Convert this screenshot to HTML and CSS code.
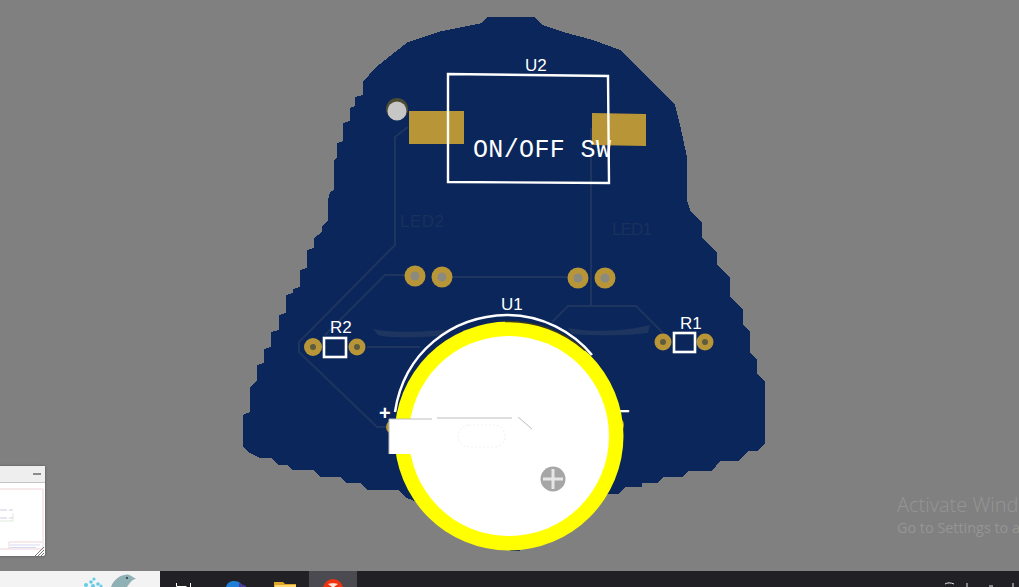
FILE: index.html
```html
<!DOCTYPE html>
<html lang="en">
<head>
    <meta charset="UTF-8">
    <meta name="viewport" content="width=device-width, initial-scale=1.0">
    <title>PCB 3D View</title>
    <link rel="stylesheet" href="styles.css">
</head>
<body>
    <div class="screen">
        <div class="viewport">
            <svg class="board" viewBox="0 0 1019 571" xmlns="http://www.w3.org/2000/svg">
                <!-- board outline, the stepped edge comes from the 3D view -->
                <polygon class="pcb" points="487,17 535,17 542,25 563,32 593,40 620,50 627,57 675,105 680,125 687,157 687,200 690,210 702,223 702,237 717,253 717,265 730,278 730,297 743,310 743,325 750,332 750,352 757,360 757,373 765,382 765,443 758,451 748,451 738,461 720,461 712,471 688,471 683,477 663,477 658,483 642,483 642,487 625,487 618,494 600,494 520,540 520,551 510,551 505,540 405,497 398,490 367,490 360,483 347,483 340,477 320,477 313,470 293,470 287,465 278,465 272,458 260,458 250,453 243,447 243,415 250,412 250,388 257,380 257,365 264,363 264,349 271,347 271,332 279,330 279,315 286,313 286,295 293,293 293,289 300,287 300,270 307,268 307,250 314,248 314,238 322,232 322,226 328,220 328,200 330,192 334,190 334,160 337,158 337,143 343,141 343,123 350,121 350,108 355,106 355,97 363,95 363,82 375,68 395,52 408,42 438,32 482,23"/>

                <!-- copper traces -->
                <g class="trace">
                    <polyline points="408,127 395,137 395,245 299,342 299,352 377,427 389,427"/>
                    <polyline points="405,275 385,275 325,335"/>
                    <polyline points="367,347 420,347"/>
                    <polyline points="452,277 570,277"/>
                    <polyline points="591,128 591,306"/>
                    <polyline points="552,322 568,306 636,306 663,333"/>
                </g>
                <path class="silk-dim" d="M373,329 C395,334 430,331 455,329 L440,336 C415,338 385,338 378,335 Z"/>
                <path class="silk-dim" d="M568,328 C595,333 625,331 650,325 L648,333 C625,336 590,336 572,334 Z"/>
                <text class="label-dim" x="400" y="227" textLength="44">LED2</text>
                <text class="label-dim" x="612" y="235" textLength="40">LED1</text>

                <!-- pads -->
                <polygon class="gold" points="409,111 464,111 464,144 409,144"/>
                <polygon class="gold" points="592,113 646,114 646,146 592,145"/>
                <circle class="hole-edge" cx="397" cy="109" r="11"/>
                <circle class="hole" cx="397" cy="111" r="9.5"/>

                <g class="gold">
                    <circle cx="415" cy="276" r="10.5"/>
                    <circle cx="442" cy="277" r="10.5"/>
                    <circle cx="578" cy="278" r="10.5"/>
                    <circle cx="605" cy="278" r="10.5"/>
                    <circle cx="313" cy="347" r="9"/>
                    <circle cx="357" cy="347" r="8.5"/>
                    <circle cx="663" cy="342" r="8.5"/>
                    <circle cx="705" cy="342" r="8.5"/>
                    <circle cx="393" cy="427" r="7"/>
                    <circle cx="615" cy="425" r="9"/>
                </g>
                <g class="drill">
                    <circle cx="415" cy="276" r="4.5"/>
                    <circle cx="442" cy="277" r="4.5"/>
                    <circle cx="578" cy="278" r="4.5"/>
                    <circle cx="605" cy="278" r="4.5"/>
                </g>
                <g class="drill-small">
                    <circle cx="313" cy="347" r="3"/>
                    <circle cx="357" cy="347" r="3"/>
                    <circle cx="663" cy="342" r="3"/>
                    <circle cx="705" cy="342" r="3"/>
                </g>

                <!-- silkscreen -->
                <polygon class="silk" points="448,74 608,76 609,183 448,182"/>
                <rect class="silk-box" x="324" y="338" width="22" height="19"/>
                <rect class="silk-box" x="674" y="333" width="21" height="19"/>
                <text class="label" x="525" y="71">U2</text>
                <text class="label" x="330" y="333">R2</text>
                <text class="label" x="680" y="329">R1</text>
                <text class="label" x="501" y="310">U1</text>
                <text class="label-big" x="473" y="157" textLength="138">ON/OFF SW</text>
                <text class="sign" x="379" y="420">+</text>
                <text class="sign" x="618" y="418">−</text>

                <!-- coin cell holder -->
                <path class="arc" d="M395,412 C404,352 452,316 507,315 C542,315 573,332 592,355"/>
                <circle class="ring" cx="509" cy="436" r="114.5"/>
                <path class="ring-shade" d="M505,321.6 A114.5 114.5 0 0 1 585,350.4"/>
                <circle class="cell" cx="509" cy="436" r="100"/>
                <rect class="tab" x="389" y="419" width="40" height="35"/>
                <polyline class="tab-edge" points="389,454 389,419 432,419"/>
                <polyline class="tab-edge" points="437,418 512,418"/>
                <polyline class="tab-edge" points="518,417 532,429"/>
                <rect class="pill" x="458" y="425" width="47" height="22" rx="11"/>
                <circle class="screw" cx="553" cy="479" r="12.5"/>
                <path class="screw-cross" d="M543,479 H563 M553,469 V489"/>
            </svg>

            <div class="mini-window">
                <div class="mini-title"><span class="mini-min"></span></div>
                <div class="mini-body">
                    <svg class="mini-sheet" viewBox="0 0 45 73" xmlns="http://www.w3.org/2000/svg">
                        <polyline class="sheet-frame" points="0,6 43,6 43,66 0,66"/>
                        <polyline class="sheet-frame" points="9,66 9,59 42,59"/>
                        <path class="sheet-part" d="M0,27 H7 M9,27 H13 M0,35 H7 M9,35 H13"/>
                        <polyline class="sheet-box" points="0,38 13,38 13,30"/>
                        <path class="sheet-block" d="M10,62 H40 M10,64.5 H36"/>
                        <path class="sheet-grip" d="M35,73 L44,64 M38,73 L44,67 M41,73 L44,70"/>
                    </svg>
                </div>
            </div>

            <div class="watermark">
                <div class="watermark-big">Activate Wind</div>
                <div class="watermark-small">Go to Settings to a</div>
            </div>
        </div>

        <div class="taskbar">
            <div class="search">
                <svg class="search-art" viewBox="0 0 80 16" xmlns="http://www.w3.org/2000/svg">
                    <g class="splash">
                        <circle cx="6" cy="14" r="2"/>
                        <circle cx="11" cy="11" r="1.8"/>
                        <circle cx="13" cy="15" r="2"/>
                        <circle cx="14" cy="8" r="1.6"/>
                        <circle cx="18" cy="13" r="1.8"/>
                        <circle cx="21" cy="15" r="1.5"/>
                    </g>
                    <path class="dolphin" d="M31,16 C33,10 39,4 47,3.5 C50,3.5 52,6 56,7.5 L52,9.5 C50,12 48,14 47,16 Z"/>
                    <circle class="dolphin-eye" cx="47" cy="7" r="1.1"/>
                </svg>
            </div>
            <div class="task-item task-first">
                <svg class="task-icon" viewBox="0 0 16 16" xmlns="http://www.w3.org/2000/svg">
                    <path class="task-view" d="M0.5,12 V15.5 H10.5 M14.5,12 V16"/>
                </svg>
            </div>
            <div class="task-item">
                <svg class="task-icon-lg" viewBox="0 0 20 16" xmlns="http://www.w3.org/2000/svg">
                    <path class="edge-blue" d="M0,16 C1,12 4,10 8,10 C11,10 14,11 15,13 L15,16 Z"/>
                    <path class="edge-dark" d="M13,12 L20,15 L20,16 L13,16 Z"/>
                </svg>
            </div>
            <div class="task-item">
                <svg class="task-icon-lg" viewBox="0 0 22 16" xmlns="http://www.w3.org/2000/svg">
                    <path class="folder-back" d="M0,11 H9 L11,13 H22 V16 H0 Z"/>
                    <rect class="folder-front" x="1" y="14" width="21" height="2"/>
                </svg>
            </div>
            <div class="task-item task-active">
                <svg class="task-icon-lg" viewBox="0 0 20 16" xmlns="http://www.w3.org/2000/svg">
                    <circle class="app-red" cx="10" cy="18" r="10"/>
                    <path class="app-mark" d="M5,13 C7,12 13,12 15,13 L11,16 H9 Z"/>
                </svg>
            </div>
            <div class="tray">
                <svg class="tray-icons" viewBox="0 0 76 16" xmlns="http://www.w3.org/2000/svg">
                    <path class="tray-line" d="M2,13 C4,11.5 8,11.5 11,13 M24,12 V16 M46,15 H50 M70,12 V16"/>
                </svg>
            </div>
        </div>
    </div>
</body>
</html>
```
FILE: styles.css
```css
html, body {
    margin: 0;
    padding: 0;
    height: 100%;
    overflow: hidden;
}

.screen {
    display: flex;
    flex-direction: column;
    height: 100vh;
    background-color: #808080;
    font-family: "Open Sans", "Liberation Sans", sans-serif;
}

.viewport {
    position: relative;
    flex: 1;
    overflow: hidden;
}

.board {
    display: block;
    width: 1019px;
    height: 571px;
}

/* board */
.pcb {
    fill: #0a265a;
    shape-rendering: crispEdges;
}

.trace polyline {
    fill: none;
    stroke: #1e3560;
    stroke-width: 2;
}

.silk-dim {
    fill: #1e3560;
}

.label-dim {
    fill: #19315c;
    font-family: "Liberation Sans", sans-serif;
    font-size: 17px;
}

.gold {
    fill: #b89638;
}

.hole-edge {
    fill: #4a4c34;
}

.hole {
    fill: #c6c6c6;
}

.drill circle {
    fill: #8a8a80;
}

.drill-small circle {
    fill: #5d5c3e;
}

.silk {
    fill: none;
    stroke: #fff;
    stroke-width: 2.4;
}

.silk-box {
    fill: none;
    stroke: #fff;
    stroke-width: 2.6;
}

.label {
    fill: #fff;
    font-family: "Liberation Sans", sans-serif;
    font-size: 17px;
}

.label-big {
    fill: #fff;
    font-family: "Liberation Mono", monospace;
    font-size: 25px;
}

.sign {
    fill: #fff;
    font-family: "Liberation Sans", sans-serif;
    font-size: 20px;
    font-weight: bold;
}

/* coin cell */
.arc {
    fill: none;
    stroke: #fff;
    stroke-width: 2.5;
}

.ring {
    fill: #ffff00;
}

.ring-shade {
    fill: none;
    stroke: #3a3a20;
    stroke-width: 1.5;
}

.cell,
.tab {
    fill: #fff;
}

.tab-edge {
    fill: none;
    stroke: #bdbdbd;
    stroke-width: 1;
}

.pill {
    fill: none;
    stroke: #f0f0f0;
    stroke-width: 1;
    stroke-dasharray: 2 2;
}

.screw {
    fill: #a6a6a6;
}

.screw-cross {
    fill: none;
    stroke: #e6e6e6;
    stroke-width: 3;
}

/* thumbnail window at the left edge */
.mini-window {
    position: absolute;
    left: -40px;
    top: 466px;
    width: 85px;
    height: 90px;
    display: flex;
    flex-direction: column;
    background-color: #fff;
    border-radius: 2px;
    box-shadow: 0 0 3px rgba(0,0,0,0.35);
}

.mini-title {
    display: flex;
    justify-content: flex-end;
    align-items: center;
    height: 16px;
    padding-right: 4px;
    background-color: #eeeeee;
    border-bottom: 1px solid #c4c4c4;
}

.mini-min {
    width: 8px;
    height: 2px;
    background-color: #8c8c8c;
}

.mini-body {
    flex: 1;
    display: flex;
    justify-content: flex-end;
}

.mini-sheet {
    display: block;
    width: 45px;
    height: 73px;
}

.sheet-frame {
    fill: none;
    stroke: #efd5d8;
    stroke-width: 1;
}

.sheet-part {
    fill: none;
    stroke: #cfcce4;
    stroke-width: 1;
}

.sheet-box {
    fill: none;
    stroke: #dfe9db;
    stroke-width: 1;
}

.sheet-block {
    fill: none;
    stroke: #d6d9ef;
    stroke-width: 1;
}

.sheet-grip {
    fill: none;
    stroke: #777;
    stroke-width: 1;
}

/* windows watermark */
.watermark {
    position: absolute;
    left: 897px;
    top: 493px;
    width: 122px;
    color: #959595;
    white-space: nowrap;
}

.watermark-big {
    font-size: 20px;
    font-weight: 300;
    line-height: 24px;
}

.watermark-small {
    font-size: 14.4px;
    line-height: 22px;
}

/* taskbar */
.taskbar {
    display: flex;
    height: 16px;
    background-color: #212024;
    overflow: hidden;
}

.search {
    width: 160px;
    margin-right: 2px;
    background-color: #f3f3f3;
    display: flex;
    justify-content: flex-end;
}

.search-art {
    display: block;
    width: 80px;
    height: 16px;
}

.splash {
    fill: #62cbe8;
}

.dolphin {
    fill: #8fb0b5;
}

.dolphin-eye {
    fill: #2c3a40;
}

.task-item {
    width: 49px;
    height: 16px;
    display: flex;
    justify-content: center;
}

.task-first {
    justify-content: flex-start;
    padding-left: 14px;
    width: 35px;
}

.task-active {
    width: 48px;
    background-color: #4b4a50;
}

.task-icon {
    display: block;
    width: 16px;
    height: 16px;
}

.task-icon-lg {
    display: block;
    width: 22px;
    height: 16px;
}

.task-view {
    fill: none;
    stroke: #fff;
    stroke-width: 1;
}

.edge-blue {
    fill: #1e7fd8;
}

.edge-dark {
    fill: #4a3c9c;
}

.folder-back {
    fill: #e0a526;
}

.folder-front {
    fill: #fbd56f;
}

.app-red {
    fill: #f0330e;
}

.app-mark {
    fill: #ffe3d9;
}

.tray {
    margin-left: auto;
}

.tray-icons {
    display: block;
    width: 76px;
    height: 16px;
}

.tray-line {
    fill: none;
    stroke: #e8e8e8;
    stroke-width: 1;
}
```
